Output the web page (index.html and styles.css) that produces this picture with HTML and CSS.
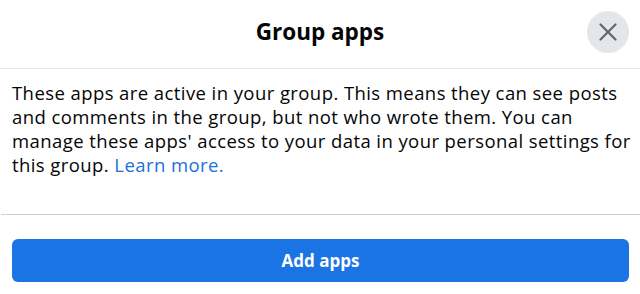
FILE: index.html
```html
<!DOCTYPE html>
<html lang="en">
<head>
    <meta charset="UTF-8">
    <title>Group apps</title>
    <link rel="stylesheet" href="styles.css">
</head>
<body>
    <div class="dialog">
        <div class="dialog-header">
            <h2 class="dialog-title">Group apps</h2>
            <button class="close-btn" aria-label="Close">
                <svg width="20" height="20" viewBox="0 0 20 20">
                    <path d="M2.5 2.5 L17.5 17.5 M17.5 2.5 L2.5 17.5" stroke="#606770" stroke-width="2.2" stroke-linecap="round" fill="none"/>
                </svg>
            </button>
        </div>

        <div class="dialog-body">
            <p>These apps are active in your group. This means they can see posts and comments in the group, but not who wrote them. You can manage these apps' access to your data in your personal settings for this group. <a href="#">Learn more.</a></p>
        </div>

        <div class="dialog-footer">
            <button class="primary-btn">Add apps</button>
        </div>
    </div>
</body>
</html>
```

FILE: styles.css
```css
body {
    margin: 0;
    padding: 0;
    background: #ffffff;
    font-family: 'Open Sans', 'Noto Sans', sans-serif;
    color: #050505;
}

.dialog {
    width: 640px;
}

.dialog-header {
    height: 68px;
    display: flex;
    align-items: center;
    justify-content: center;
    position: relative;
    border-bottom: 1px solid #e4e6eb;
}

.dialog-title {
    margin: 0 0 5px;
    font-size: 22.5px;
    font-weight: 700;
}

.close-btn {
    position: absolute;
    right: 11px;
    top: 11px;
    width: 42px;
    height: 42px;
    border: none;
    border-radius: 50%;
    background: #e4e6eb;
    display: flex;
    align-items: center;
    justify-content: center;
    padding: 0;
    cursor: pointer;
}

.dialog-body {
    padding: 12px 4px 37px 12px;
    margin-left: 1px;
    border-bottom: 1px solid #ced0d4;
}

.dialog-body p {
    margin: 0;
    margin-left: -1px;
    font-size: 18.5px;
    line-height: 24px;
    letter-spacing: 0.42px;
}

.dialog-body a {
    color: #216fdb;
    text-decoration: none;
}

.dialog-footer {
    padding: 24px 11px 12px 12px;
}

.primary-btn {
    width: 100%;
    height: 43px;
    border: none;
    border-radius: 6px;
    background: #1b74e4;
    color: #ffffff;
    font-family: inherit;
    font-size: 17px;
    font-weight: 700;
    cursor: pointer;
}
```
